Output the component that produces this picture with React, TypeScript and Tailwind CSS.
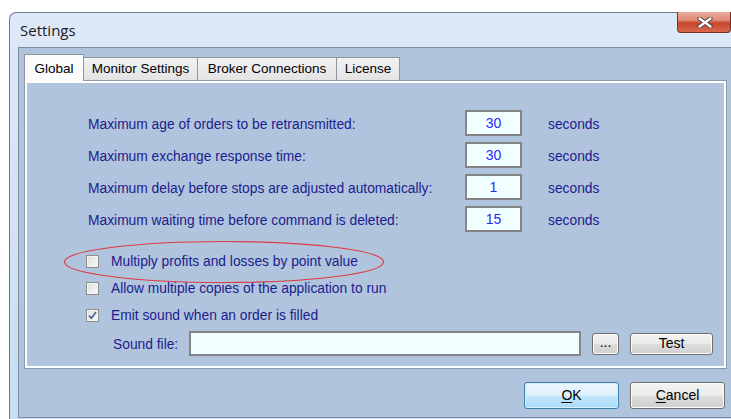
import React from "react";

const navy = "text-[#1c1c8c]";

function NumBox({ value }: { value: string }) {
  return (
    <div className="w-[57px] h-[26px] border-2 border-[#858585] bg-[#f0ffff] flex items-center justify-center text-[#2a2af2] text-[14px]">
      {value}
    </div>
  );
}

function Check({ checked, label }: { checked?: boolean; label: string }) {
  return (
    <div className="h-[27px] flex items-center">
      <div className="w-[13px] h-[13px] border border-[#8f8f8f] bg-[linear-gradient(135deg,#dcdcdc,#fbfbfb)] flex items-center justify-center shadow-[inset_0_0_0_1px_#f4f4f4]">
        {checked && (
          <svg width="9" height="9" viewBox="0 0 9 9">
            <path d="M1 4.6 L3.4 7.2 L8 1" fill="none" stroke="#4a5f97" strokeWidth="1.6" />
          </svg>
        )}
      </div>
      <span className={`ml-[12px] pt-[1px] ${navy}`}>{label}</span>
    </div>
  );
}

function Button({
  children,
  primary,
  className = "",
}: {
  children: React.ReactNode;
  primary?: boolean;
  className?: string;
}) {
  const skin = primary
    ? "border-[#3c7fb1] bg-[linear-gradient(to_bottom,#ecf7fe_0%,#dcf0fc_50%,#c4e6fb_51%,#a9dbf7_100%)] shadow-[inset_0_0_0_1px_#d8eefb]"
    : "border-[#707070] bg-[linear-gradient(to_bottom,#f2f2f2_0%,#ebebeb_50%,#dddddd_51%,#cfcfcf_100%)] shadow-[inset_0_0_0_1px_#fcfcfc]";
  return (
    <div
      className={`rounded-[3px] border flex items-center justify-center text-black text-[14px] ${skin} ${className}`}
    >
      {children}
    </div>
  );
}

function Tab({ label, active, w }: { label: string; active?: boolean; w: string }) {
  if (active) {
    return (
      <div
        className={`${w} h-[27px] border border-b-0 border-[#8c95a0] bg-[#fbfbfc] flex items-start justify-center pt-[4px] text-[13.5px] text-black z-10 relative`}
      >
        {label}
      </div>
    );
  }
  return (
    <div
      className={`${w} h-[24px] -ml-px border border-b-0 border-[#8c95a0] bg-[linear-gradient(to_bottom,#f3f3f3,#e2e2e2)] flex items-center justify-center text-[13.5px] text-black`}
    >
      {label}
    </div>
  );
}

const rows = [
  ["Maximum age of orders to be retransmitted:", "30"],
  ["Maximum exchange response time:", "30"],
  ["Maximum delay before stops are adjusted automatically:", "1"],
  ["Maximum waiting time before command is deleted:", "15"],
];

export default function App() {
  return (
    <div className="w-[731px] h-[419px] bg-white overflow-hidden pt-[12px] pl-[9px] font-['Liberation_Sans',Arial,sans-serif] text-[13.8px]">
      <div className="w-[722px] h-[414px] rounded-tl-[7px] border-l border-t border-[#6b7a8c] bg-[linear-gradient(to_bottom,#dde9f8,#c9dcf1)] flex flex-col">
        {/* title bar */}
        <div className="h-[34px] flex items-start">
          <span className="pl-[10px] pt-[6px] text-[15px] text-[#1b1b1b] font-['Open_Sans','Noto_Sans',sans-serif]">
            Settings
          </span>
          <div className="ml-auto w-[54px] h-[21px] -mt-px rounded-b-[4px] border border-t-0 border-[#7a2f24] bg-[linear-gradient(to_bottom,#ebab9c_0%,#e08c77_40%,#c7452c_55%,#d9694f_100%)] flex items-center">
            <svg width="16" height="11" viewBox="0 0 16 11" className="ml-[19px]">
              <path d="M2.5 1.5 L13.5 9.5 M13.5 1.5 L2.5 9.5" stroke="#55433f" strokeWidth="4.2" strokeLinecap="round" />
              <path d="M2.5 1.5 L13.5 9.5 M13.5 1.5 L2.5 9.5" stroke="#ffffff" strokeWidth="2.2" strokeLinecap="round" />
            </svg>
          </div>
        </div>

        {/* client area */}
        <div className="ml-[8px] h-[371px] border-l border-t border-b border-[#7d8ea3] bg-[#b0c4de] pt-[6px] pl-[5px] pr-[4px] flex flex-col">
          <div className="flex items-end h-[27px] -mb-px">
            <Tab label="Global" active w="w-[60px]" />
            <Tab label="Monitor Settings" w="w-[115px]" />
            <Tab label="Broker Connections" w="w-[140px]" />
            <Tab label="License" w="w-[64px]" />
          </div>

          <div className="relative h-[289px] border border-[#8c99a8] shadow-[inset_0_0_0_2px_#ffffff] pt-[29px] pl-[63px]">
            <div className="grid grid-cols-[377px_57px_auto] gap-y-[6px] items-center">
              {rows.map(([label, v]) => (
                <React.Fragment key={label}>
                  <span className={`${navy} pt-[5px]`}>{label}</span>
                  <NumBox value={v} />
                  <span className={`${navy} pl-[26px] pt-[4px]`}>seconds</span>
                </React.Fragment>
              ))}
            </div>

            <div className="mt-[16px] -ml-[2px]">
              <Check label="Multiply profits and losses by point value" />
              <Check label="Allow multiple copies of the application to run" />
              <Check checked label="Emit sound when an order is filled" />
            </div>

            <div className="mt-[2px] ml-[25px] h-[25px] flex items-center">
              <span className={`${navy} w-[76px] pt-[4px]`}>Sound file:</span>
              <div className="w-[392px] h-[25px] border-2 border-[#858585] bg-[#f0ffff]" />
              <Button className="ml-[11px] w-[27px] h-[22px] leading-none pb-[4px]">...</Button>
              <Button className="ml-[11px] w-[83px] h-[22px]">Test</Button>
            </div>

            {/* highlight around the first option */}
            <svg
              className="absolute left-[38px] top-[159px] pointer-events-none"
              width="322"
              height="44"
              viewBox="0 0 322 44"
            >
              <ellipse cx="161" cy="22" rx="159.5" ry="20.5" fill="none" stroke="#dc3b3f" strokeWidth="1.2" />
            </svg>
          </div>

          <div className="mt-[13px] flex justify-end gap-[11px] pr-[2px]">
            <Button primary className="w-[95px] h-[27px]">
              <span className="underline underline-offset-2">O</span>K
            </Button>
            <Button className="w-[95px] h-[27px]">
              <span className="underline underline-offset-2">C</span>ancel
            </Button>
          </div>
        </div>
      </div>
    </div>
  );
}
